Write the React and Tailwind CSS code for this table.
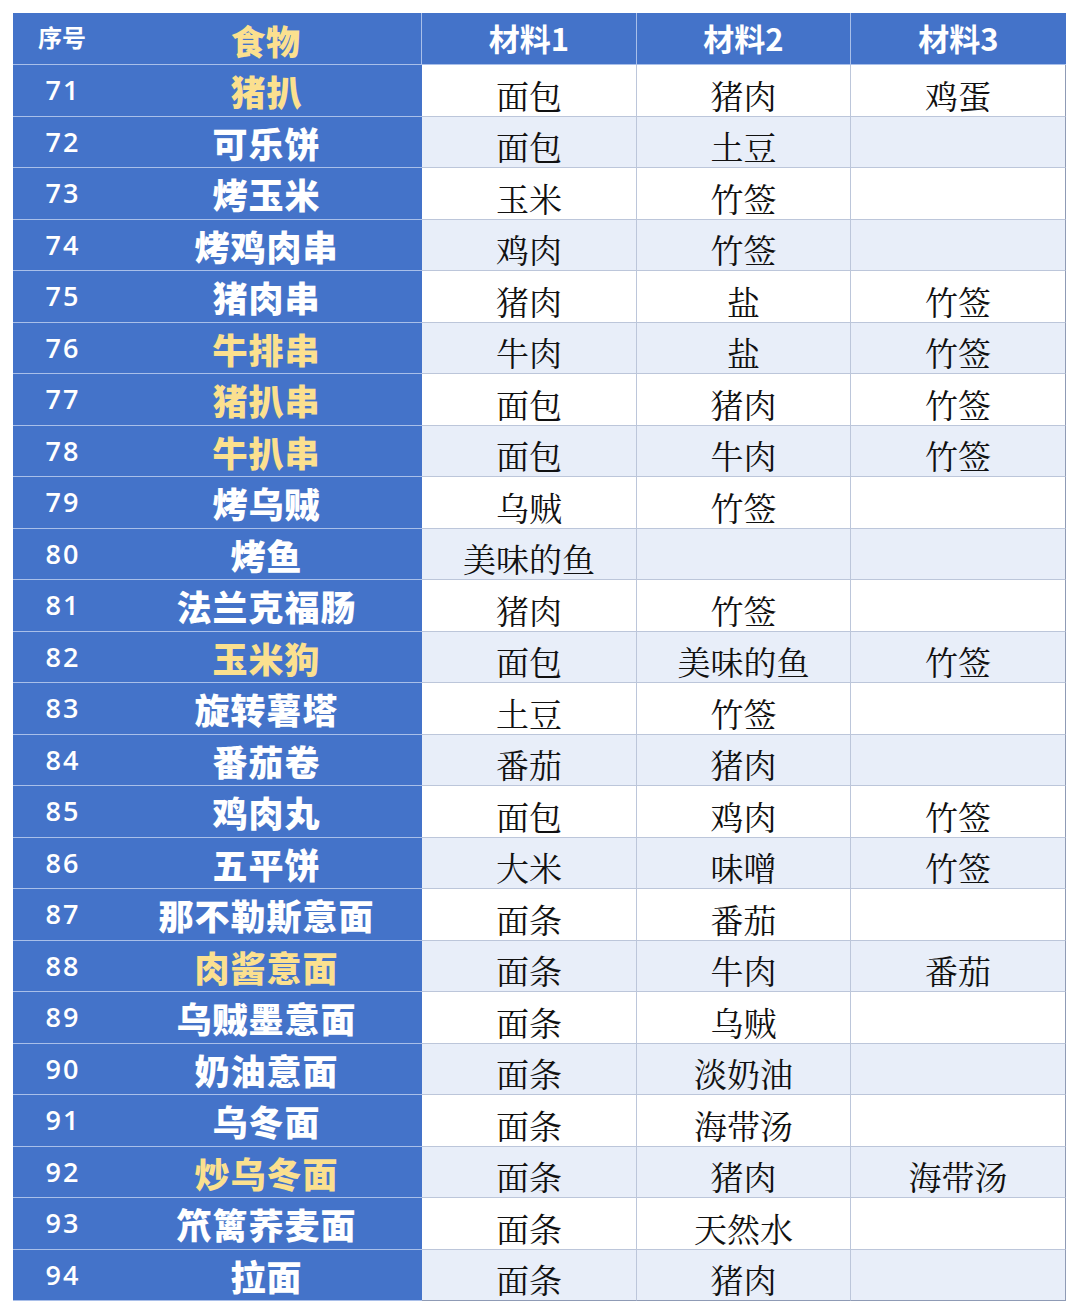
import React from "react";

const rows = [
  [71, "猪扒", true, "面包", "猪肉", "鸡蛋"],
  [72, "可乐饼", false, "面包", "土豆", ""],
  [73, "烤玉米", false, "玉米", "竹签", ""],
  [74, "烤鸡肉串", false, "鸡肉", "竹签", ""],
  [75, "猪肉串", false, "猪肉", "盐", "竹签"],
  [76, "牛排串", true, "牛肉", "盐", "竹签"],
  [77, "猪扒串", true, "面包", "猪肉", "竹签"],
  [78, "牛扒串", true, "面包", "牛肉", "竹签"],
  [79, "烤乌贼", false, "乌贼", "竹签", ""],
  [80, "烤鱼", false, "美味的鱼", "", ""],
  [81, "法兰克福肠", false, "猪肉", "竹签", ""],
  [82, "玉米狗", true, "面包", "美味的鱼", "竹签"],
  [83, "旋转薯塔", false, "土豆", "竹签", ""],
  [84, "番茄卷", false, "番茄", "猪肉", ""],
  [85, "鸡肉丸", false, "面包", "鸡肉", "竹签"],
  [86, "五平饼", false, "大米", "味噌", "竹签"],
  [87, "那不勒斯意面", false, "面条", "番茄", ""],
  [88, "肉酱意面", true, "面条", "牛肉", "番茄"],
  [89, "乌贼墨意面", false, "面条", "乌贼", ""],
  [90, "奶油意面", false, "面条", "淡奶油", ""],
  [91, "乌冬面", false, "面条", "海带汤", ""],
  [92, "炒乌冬面", true, "面条", "猪肉", "海带汤"],
  [93, "笊篱荞麦面", false, "面条", "天然水", ""],
  [94, "拉面", false, "面条", "猪肉", ""],
];

function HeadCell({ children, last }) {
  return (
    <div
      className={`h-[52px] bg-[#4473c9] border-b border-b-[#a9bfe9] flex items-center justify-center text-white text-[31px] font-bold font-['Noto_Sans_CJK_SC','Noto_Sans',sans-serif] ${last ? "" : "border-r border-r-[#a9bfe9]"}`}
    >
      {children}
    </div>
  );
}

function DataCell({ children, light, last, lastCol }) {
  return (
    <div
      className={`h-[51.5px] ${light ? "bg-[#e8eef9]" : "bg-white"} border-b ${last ? "border-b-[#8f9bb5]" : "border-b-[#bcc6da]"} border-r ${lastCol ? "border-r-[#8f9bb5]" : "border-r-[#bcc6da]"} flex items-center justify-center text-[#111] text-[33px] pt-[8px] font-['Noto_Serif_CJK_SC','Liberation_Serif','Noto_Sans_CJK_SC',serif]`}
    >
      {children}
    </div>
  );
}

export default function App() {
  return (
    <div className="w-[1080px] h-[1305px] bg-white pt-[13px] pl-[13px]">
      <div className="grid grid-cols-[98px_311px_215px_214px_215px] w-[1053px]">
        <div className="h-[52px] bg-[#4473c9] border-b border-b-[#a9bfe9] flex items-center justify-center text-white text-[24px] font-bold pb-[4px] font-['Noto_Sans_CJK_SC','Noto_Sans',sans-serif]">
          序号
        </div>
        <div className="h-[52px] bg-[#4473c9] border-b border-b-[#a9bfe9] border-r border-r-[#a9bfe9] flex items-center justify-center text-[#fbe08f] text-[34px] font-black tracking-[1px] pt-[4px] font-['Noto_Sans_CJK_SC','Noto_Sans',sans-serif]">
          食物
        </div>
        <HeadCell>材料1</HeadCell>
        <HeadCell>材料2</HeadCell>
        <HeadCell last>材料3</HeadCell>
        {rows.map(([n, food, yellow, a, b, c], idx) => {
          const light = idx % 2 === 1;
          const last = idx === rows.length - 1;
          return (
            <React.Fragment key={n}>
              <div className="h-[51.5px] bg-[#4473c9] border-b border-b-[#a9bfe9] flex items-center justify-center text-white text-[27px] font-semibold tracking-[2px] pl-[2px] font-['Open_Sans','Noto_Sans',sans-serif]">
                {n}
              </div>
              <div
                className={`h-[51.5px] bg-[#4473c9] border-b border-b-[#a9bfe9] flex items-center justify-center text-[35px] font-black tracking-[1px] pt-[2px] font-['Noto_Sans_CJK_SC','Noto_Sans',sans-serif] ${yellow ? "text-[#fbe08f]" : "text-white"}`}
              >
                {food}
              </div>
              <DataCell light={light} last={last}>{a}</DataCell>
              <DataCell light={light} last={last}>{b}</DataCell>
              <DataCell light={light} last={last} lastCol>{c}</DataCell>
            </React.Fragment>
          );
        })}
      </div>
    </div>
  );
}
